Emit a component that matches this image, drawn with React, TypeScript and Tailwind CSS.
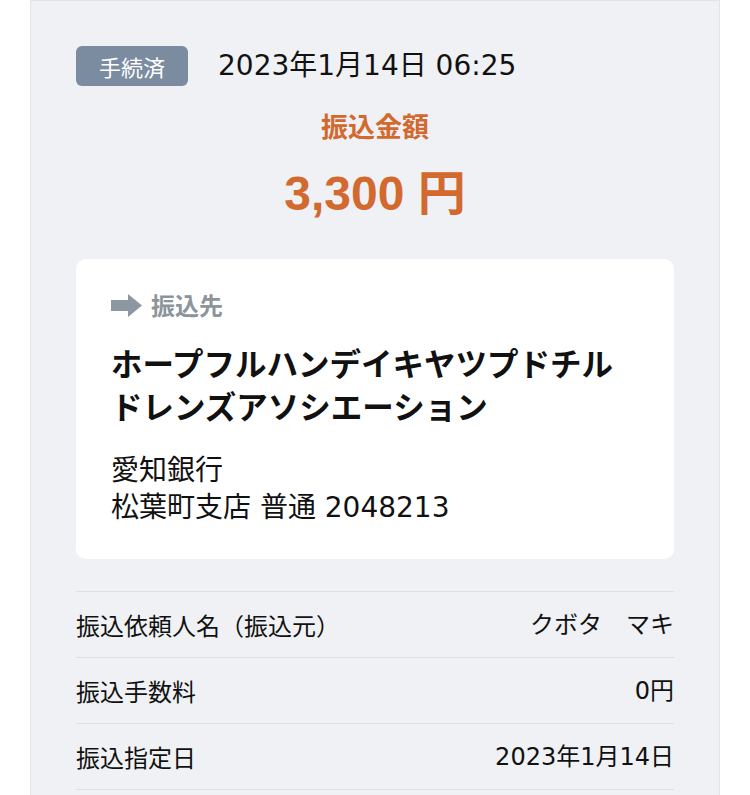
import React from 'react';

// DejaVu gives the wide, tall numerals of the original; kana/kanji fall through to Noto CJK
const font = { fontFamily: '"DejaVu Sans", "Noto Sans CJK JP", sans-serif' };
const boldNum = { fontFamily: '"Liberation Sans", "Noto Sans CJK JP", sans-serif' };
const cjk = { fontFamily: '"Noto Sans CJK JP", sans-serif' };

const rows = [
  { label: '振込依頼人名（振込元）', value: 'クボタ　マキ' },
  { label: '振込手数料', value: '0円' },
  { label: '振込指定日', value: '2023年1月14日' },
];

const ArrowIcon = () => (
  <svg width="31" height="23" viewBox="0 0 31 23" className="shrink-0">
    <rect x="0" y="6" width="18" height="11" fill="#8c97a1" />
    <polygon points="17,0 31,11.5 17,23" fill="#8c97a1" />
  </svg>
);

const App = () => {
  return (
    <div className="min-h-screen bg-white" style={font}>
      <div className="ml-[30px] w-[690px] min-h-[795px] bg-[#f0f1f4] border-x border-t border-[#e2e4e8] px-[45px] pt-[45px]">
        {/* status + date */}
        <div className="flex items-center gap-[30px]">
          <span
            className="flex h-[40px] w-[112px] items-center justify-center rounded-[6px] bg-[#7b8ba0] text-[22px] text-white"
            style={cjk}
          >
            手続済
          </span>
          <span className="text-[28px] leading-none text-[#111]">2023年1月14日 06:25</span>
        </div>

        {/* amount */}
        <p className="mt-[21px] text-center text-[27px] font-bold leading-[38px] text-[#d2692f]" style={cjk}>
          振込金額
        </p>
        <p className="mt-[19px] text-center text-[48px] font-bold leading-[60px] text-[#d2692f]" style={boldNum}>
          3,300 円
        </p>

        {/* destination card */}
        <div className="mt-[35px] rounded-[10px] bg-white px-[35px] pt-[30px] pb-[33px]">
          <div className="flex h-[32px] items-center gap-[9px]">
            <ArrowIcon />
            <span className="text-[24px] font-bold text-[#8c949c]" style={cjk}>振込先</span>
          </div>
          <div className="mt-[20px] text-[31.5px] font-bold leading-[43px] text-[#111]" style={cjk}>
            <p>ホープフルハンデイキヤツプドチル</p>
            <p>ドレンズアソシエーション</p>
          </div>
          <div className="mt-[25px] text-[28px] leading-[37px] text-[#111]">
            <p>愛知銀行</p>
            <p>松葉町支店 普通 2048213</p>
          </div>
        </div>

        {/* details */}
        <div className="mt-[32px] border-b border-[#dcdfe3]">
          {rows.map((r) => (
            <div
              key={r.label}
              className="flex h-[66px] items-center justify-between border-t border-[#dcdfe3] text-[24px] text-[#111]"
            >
              <span style={cjk}>{r.label}</span>
              <span>{r.value}</span>
            </div>
          ))}
        </div>
      </div>
    </div>
  );
};

export default App;
